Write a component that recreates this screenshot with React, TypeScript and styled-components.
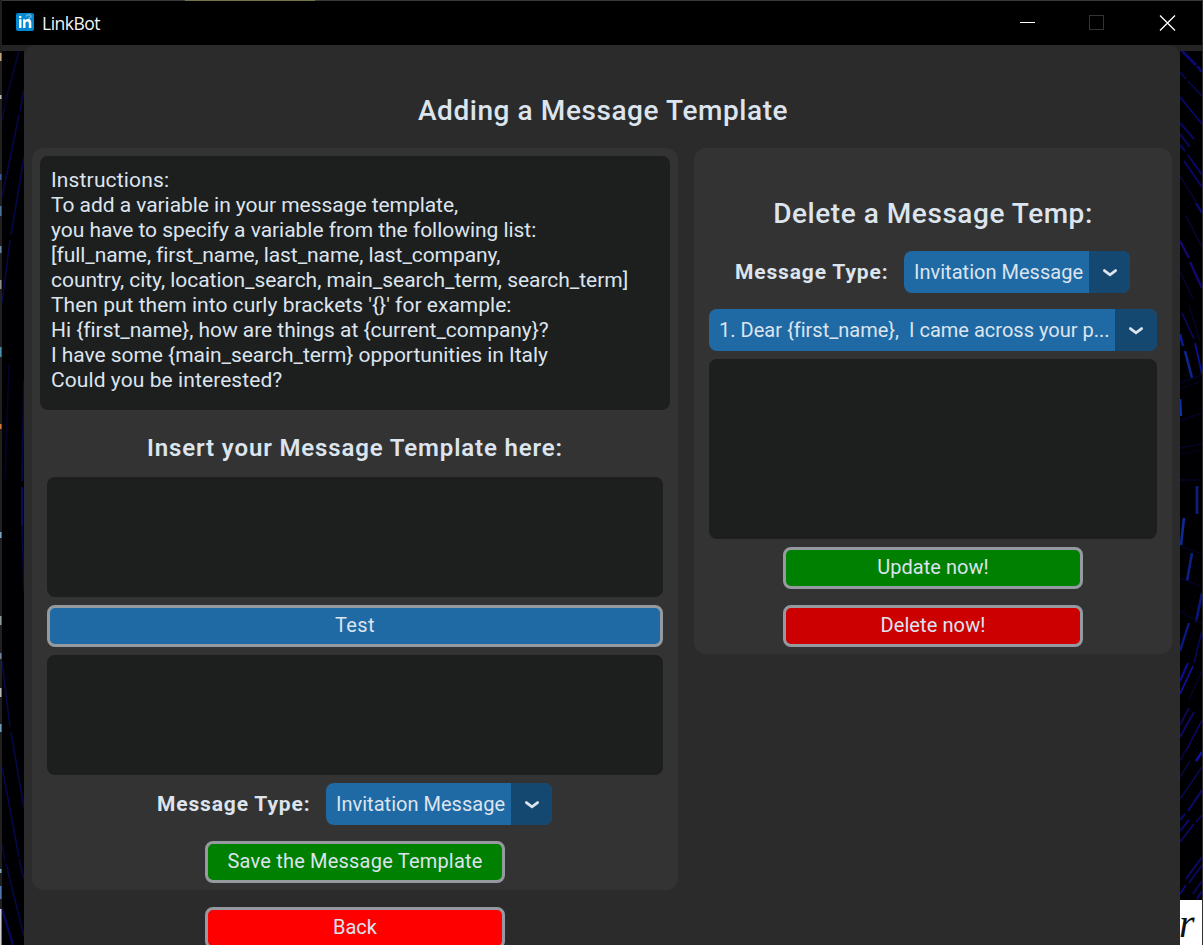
import React from "react";
import styled, { createGlobalStyle } from "styled-components";

const GlobalStyle = createGlobalStyle`
  *, *::before, *::after { box-sizing: border-box; }
  html, body { margin: 0; padding: 0; background: #000; overflow: hidden; }
  body { font-family: Roboto, "Liberation Sans", sans-serif; color: #dce4ee; }
`;

const Desktop = styled.div`
  width: 1203px;
  height: 945px;
  display: grid;
  grid-template-columns: 2px 1200px 1px;
  background: #2e2e2e;
  overflow: hidden;
`;

const Window = styled.div`
  display: flex;
  flex-direction: column;
  height: 945px;
  min-height: 0;
  overflow: hidden;
`;

const TopEdge = styled.div`
  height: 1px;
  flex: none;
  background: linear-gradient(to right, #3a3a3a 183px, #747446 183px, #747446 313px, #3a3a3a 313px);
`;

const TitleBar = styled.header`
  height: 44px;
  flex: none;
  display: flex;
  align-items: center;
  justify-content: space-between;
  background: #000;
  padding: 0 26px 0 14px;
`;

const AppName = styled.div`
  display: flex;
  align-items: center;
  gap: 8px;
  height: 44px;
  padding-bottom: 2px;
`;

const AppTitle = styled.span`
  font: 400 17.5px/22px "Open Sans", "Noto Sans", sans-serif;
  letter-spacing: -0.5px;
  color: #f4f4f4;
  padding-top: 2px;
`;

const WindowButtons = styled.div`
  display: flex;
  align-items: center;
  gap: 54px;
  padding-bottom: 1px;
`;

const Body = styled.div`
  flex: 1;
  min-height: 0;
  display: grid;
  grid-template-columns: 22px 1156px 22px;
  background: #242424;
`;

const ArtColumn = styled.aside`
  padding-top: 6px;
  min-height: 0;
  overflow: hidden;
  svg { display: block; background: #000003; }
`;

const Panel = styled.main`
  background: #2b2b2b;
  border-radius: 12px 12px 0 0;
  padding: 0 8px;
  min-height: 0;
  overflow: hidden;
`;

const Heading = styled.h1<{ $size: number; $height: number; $spacing?: number; $top?: number; $weight?: number }>`
  margin: 0;
  padding-top: ${(p) => p.$top ?? 0}px;
  font-weight: ${(p) => p.$weight ?? 500};
  font-size: ${(p) => p.$size}px;
  line-height: ${(p) => p.$height}px;
  letter-spacing: ${(p) => p.$spacing ?? 0}px;
  text-align: center;
  white-space: nowrap;
`;

const PageHead = styled.div`
  height: 103px;
  padding: 45px 0 0 2px;
`;

const Columns = styled.div`
  display: grid;
  grid-template-columns: 646px 478px;
  column-gap: 16px;
  align-items: start;
`;

const Column = styled.section`
  display: flex;
  flex-direction: column;
  align-items: center;
  gap: 17px;
`;

const Card = styled.div<{ $pad: string }>`
  width: 100%;
  display: flex;
  flex-direction: column;
  align-items: center;
  background: #333;
  border-radius: 12px;
  padding: ${(p) => p.$pad};
`;

const Instructions = styled.div`
  width: 630px;
  height: 254px;
  background: #1d1e1e;
  border-radius: 8px;
  padding: 12px 11px;
  font-size: 21px;
  line-height: 25px;
  white-space: pre;
`;

const Line = styled.div<{ $spacing: number }>`
  letter-spacing: ${(p) => p.$spacing}px;
`;

const TextBox = styled.div<{ $width: number; $height: number; $top?: number }>`
  width: ${(p) => p.$width}px;
  height: ${(p) => p.$height}px;
  margin-top: ${(p) => p.$top ?? 0}px;
  background: #1d1e1e;
  border-radius: 8px;
`;

const Button = styled.button<{ $color: string; $width?: number; $top?: number; $spacing?: number }>`
  width: ${(p) => p.$width ?? 300}px;
  height: 42px;
  flex: none;
  margin: ${(p) => p.$top ?? 8}px 0 0;
  padding: 0 0 2px;
  border: 3px solid #949a9f;
  border-radius: 8px;
  background: ${(p) => p.$color};
  color: #dce4ee;
  font: 20px/30px Roboto, sans-serif;
  letter-spacing: ${(p) => p.$spacing ?? 0.2}px;
`;

const TypeRow = styled.div<{ $top?: number }>`
  display: flex;
  align-items: center;
  justify-content: center;
  gap: 16px;
  margin: ${(p) => p.$top ?? 8}px 0 0;
  padding-right: 1px;
`;

const TypeLabel = styled.label`
  width: 153px;
  font-size: 21px;
  line-height: 40px;
  font-weight: 700;
  letter-spacing: 0.85px;
  white-space: nowrap;
`;

const SelectBox = styled.div<{ $width: number; $arrow: number; $top?: number }>`
  width: ${(p) => p.$width}px;
  height: 42px;
  margin-top: ${(p) => p.$top ?? 0}px;
  display: grid;
  grid-template-columns: minmax(0, 1fr) ${(p) => p.$arrow}px;
  border-radius: 8px;
  overflow: hidden;
  background: #1f6aa5;
`;

const SelectText = styled.span<{ $spacing: number }>`
  padding-left: 10px;
  font-size: 20px;
  line-height: 42px;
  letter-spacing: ${(p) => p.$spacing}px;
  white-space: pre;
`;

const SelectArrow = styled.span`
  display: flex;
  align-items: center;
  justify-content: center;
  padding-top: 1px;
  background: #144870;
`;

interface SelectProps {
  text: string;
  width: number;
  arrow: number;
  spacing: number;
  top?: number;
}

function Select({ text, width, arrow, spacing, top }: SelectProps) {
  return (
    <SelectBox $width={width} $arrow={arrow} $top={top}>
      <SelectText $spacing={spacing}>{text}</SelectText>
      <SelectArrow>
        <svg width="16" height="10" viewBox="0 0 16 10" fill="none" stroke="#dce4ee" strokeWidth="2.8" strokeLinecap="round" strokeLinejoin="miter">
          <path d="M2.400 2.600 L8 6.800 L13.600 2.600" />
        </svg>
      </SelectArrow>
    </SelectBox>
  );
}

function LinkedInMark() {
  return (
    <svg width="18" height="18" viewBox="0 0 18 18">
      <rect width="18" height="18" rx="2" fill="#0288d1" />
      <path d="M3 6.3h2.5V15H3zM7 6.3h2.4v1.2c.6-.9 1.500-1.400 2.700-1.400 2.200 0 3.200 1.400 3.200 3.700V15h-2.500v-4.600c0-1.300-.5-2-1.500-2-1.200 0-1.800.8-1.800 2.100V15H7z" fill="#fff" />
      <circle cx="4.200" cy="4" r="1.300" fill="#fff" />
      <path d="M10 3.500c.5-2 4.500-2.500 5-.3.200 1.300-1.800 1.500-2.500 2.700" stroke="#64b5e2" strokeWidth="1.500" fill="none" />
    </svg>
  );
}

type Stroke = [number, number, number, number, string, number];

const leftStrokes: Stroke[] = [
  [17, 0, 3, 52, "#060638", 1.6],
  [3, 54, 0, 70, "#060638", 1.6],
  [22, 39, 18, 60, "#070748", 1.6],
  [17, 64, 0, 146, "#070748", 1.6],
  [22, 106, 9, 184, "#070748", 1.6],
  [8, 189, 0, 252, "#070748", 1.6],
  [7, 313, 3, 428, "#04042b", 1.6],
  [22, 330, 20, 430, "#060640", 1.8],
  [20, 436, 20, 475, "#090960", 2],
  [20, 475, 22, 540, "#060640", 1.6],
  [0, 610, 8, 676, "#070748", 1.6],
  [9, 681, 22, 757, "#070748", 1.6],
  [0, 716, 17, 806, "#070748", 1.6],
  [17, 808, 22, 828, "#070748", 1.6],
  [0, 793, 3, 810, "#060638", 1.6],
  [4, 813, 22, 885, "#070748", 1.6],
  [0, 858, 11, 894, "#080858", 2.4],
];

const rightStrokes: Stroke[] = [
  [2, 0, 16, 14, "#0b0b78", 2.6],
  [17, 15, 22, 21, "#0b0b78", 2.6],
  [0, 21, 6, 28, "#08085c", 1.6],
  [8, 30, 22, 45, "#08085c", 1.4],
  [0, 46, 22, 73, "#090970", 1.5],
  [0, 72, 14, 88, "#080860", 2],
  [0, 83, 10, 96, "#080860", 2],
  [0, 94, 5, 100, "#080860", 2],
  [8, 104, 22, 124, "#08086a", 2],
  [4, 110, 22, 136, "#08086a", 2],
  [0, 125, 16, 151, "#0b063c", 1.4],
  [16, 152, 22, 162, "#0b0b78", 2.4],
  [6, 165, 22, 196, "#0b0638", 1.4],
  [0, 190, 9, 207, "#150775", 2.2],
  [10, 211, 22, 237, "#150775", 2.2],
  [0, 220, 13, 248, "#060630", 1.4],
  [9, 254, 20, 290, "#05052a", 1.4],
  [2, 262, 14, 288, "#090965", 1.6],
  [15, 292, 22, 323, "#08109a", 1.8],
  [0, 283, 3, 295, "#0a1a94", 2.6],
  [5, 300, 12, 327, "#0c248f", 2.6],
  [0, 348, 1, 365, "#1030a8", 2.4],
  [0, 332, 22, 324, "#040427", 1.5],
  [0, 338, 22, 330, "#040427", 1],
  [0, 370, 22, 362, "#040427", 1.5],
  [0, 397, 22, 393, "#040427", 1.5],
  [0, 403, 22, 399, "#040427", 1],
  [0, 429, 22, 429, "#040427", 1.5],
  [17, 435, 17, 463, "#0c1f80", 2.6],
  [4, 467, 1, 494, "#0c2c91", 2.6],
  [12, 502, 7, 530, "#0b1f85", 2.6],
  [22, 542, 16, 571, "#0a157c", 2.6],
  [9, 572, 0, 600, "#0b187c", 2.4],
  [0, 495, 22, 503, "#040427", 1.2],
  [0, 527, 22, 536, "#040427", 1.2],
  [0, 560, 22, 573, "#040427", 1.2],
  [22, 580, 14, 612, "#09095c", 1.6],
  [8, 612, 0, 630, "#0c0c8d", 2.2],
  [13, 615, 0, 643, "#1111a4", 1.6],
  [22, 620, 9, 649, "#060628", 1.4],
  [9, 657, 0, 674, "#0d0750", 2],
  [14, 661, 0, 686, "#0d0765", 2],
  [22, 669, 6, 700, "#100770", 1.4],
  [22, 701, 16, 710, "#1111a0", 2.6],
  [10, 710, 0, 726, "#08083d", 1.6],
  [5, 700, 0, 710, "#08083d", 1.6],
  [22, 716, 0, 748, "#090955", 1.4],
  [22, 739, 8, 760, "#0a0a68", 2.2],
  [5, 763, 0, 769, "#0a0a68", 2],
  [9, 769, 0, 780, "#0a0a68", 2],
  [22, 764, 16, 771, "#080860", 1.6],
  [14, 773, 0, 791, "#0a0a68", 1.6],
  [22, 806, 6, 828, "#0a0a68", 2],
  [22, 814, 9, 832, "#0a0a68", 1.6],
  [6, 834, 0, 843, "#0b0b80", 1.6],
  [22, 830, 13, 843, "#080860", 1.8],
  [22, 840, 17, 848, "#0a0a68", 2],
];

function Wallpaper({ strokes, signature }: { strokes: Stroke[]; signature?: boolean }) {
  return (
    <ArtColumn>
      <svg width="22" height="894" viewBox="0 0 22 894">
        {strokes.map(([x1, y1, x2, y2, color, width], i) => (
          <line key={i} x1={x1} y1={y1} x2={x2} y2={y2} stroke={color} strokeWidth={width} />
        ))}
        {signature && (
          <>
            <rect y="849" width="22" height="45" fill="#fff" />
            <text x="-1" y="886" fontFamily="Liberation Serif, serif" fontStyle="italic" fontSize="40" fill="#111">r</text>
          </>
        )}
      </svg>
    </ArtColumn>
  );
}

const edgeMarks: [number, number, string][] = [
  [53, 8, "#c3a477"], [95, 4, "#b8b8b8"], [174, 6, "#315d91"], [206, 10, "#4c7297"],
  [246, 7, "#66869e"], [280, 9, "#8b8b8b"], [347, 10, "#4b91ae"], [424, 5, "#d37835"],
  [532, 6, "#77a5c4"], [616, 9, "#8f9a9e"], [653, 6, "#70859d"], [688, 9, "#b5b5b5"],
  [724, 8, "#6ba0bd"], [869, 4, "#76a9b2"], [886, 13, "#4d79ad"], [909, 36, "#cfcfcf"],
];

export default function App() {
  return (
    <>
      <GlobalStyle />
      <Desktop>
        <svg width="2" height="945" viewBox="0 0 2 945">
          <rect width="2" height="945" fill="#202020" />
          {edgeMarks.map(([y, height, color]) => (
            <rect key={y} y={y} width="1.500" height={height} fill={color} />
          ))}
        </svg>
        <Window>
          <TopEdge />
          <TitleBar>
            <AppName>
              <LinkedInMark />
              <AppTitle>LinkBot</AppTitle>
            </AppName>
            <WindowButtons>
              <svg width="15" height="15" viewBox="0 0 15 15" shapeRendering="crispEdges"><path d="M0 7.500H15" stroke="#fff" /></svg>
              <svg width="15" height="15" viewBox="0 0 15 15" shapeRendering="crispEdges"><rect x=".5" y=".5" width="14" height="14" fill="none" stroke="#333" /></svg>
              <svg width="18" height="16" viewBox="0 0 18 16"><path d="M2 .5L17 15.500M17 .5L2 15.500" stroke="#fff" strokeWidth="1.300" /></svg>
            </WindowButtons>
          </TitleBar>
          <Body>
            <Wallpaper strokes={leftStrokes} />
            <Panel>
              <PageHead>
                <Heading $size={28} $height={42} $spacing={0.58}>Adding a Message Template</Heading>
              </PageHead>
              <Columns>
                <Column>
                  <Card $pad="8px 8px 7px">
                    <Instructions>
                      <Line $spacing={0.15}>Instructions:</Line>
                      <Line $spacing={-0.05}>To add a variable in your message template,</Line>
                      <Line $spacing={-0.04}>you have to specify a variable from the following list:</Line>
                      <Line $spacing={-0.08}>[full_name, first_name, last_name, last_company,</Line>
                      <Line $spacing={-0.03}>country, city, location_search, main_search_term, search_term]</Line>
                      <Line $spacing={0.02}>{"Then put them into curly brackets '{}' for example:"}</Line>
                      <Line $spacing={-0.04}>{"Hi {first_name}, how are things at {current_company}?"}</Line>
                      <Line $spacing={-0.05}>{"I have some {main_search_term} opportunities in Italy"}</Line>
                      <Line $spacing={0.08}>Could you be interested?</Line>
                    </Instructions>
                    <Heading as="h2" $size={24} $height={57} $top={10} $weight={600} $spacing={0.86}>Insert your Message Template here:</Heading>
                    <TextBox $width={616} $height={120} />
                    <Button $color="#1f6aa5" $width={616} $spacing={0.4}>Test</Button>
                    <TextBox $width={616} $height={120} $top={8} />
                    <TypeRow>
                      <TypeLabel>Message Type:</TypeLabel>
                      <Select text="Invitation Message" width={226} arrow={41} spacing={0.02} />
                    </TypeRow>
                    <Button $color="#008000" $top={16}>Save the Message Template</Button>
                  </Card>
                  <Button $color="#ff0000" $top={0} $spacing={0}>Back</Button>
                </Column>
                <Card $pad="45px 15px 7px">
                  <Heading as="h2" $size={28} $height={42} $spacing={0.55}>Delete a Message Temp:</Heading>
                  <TypeRow $top={16}>
                    <TypeLabel>Message Type:</TypeLabel>
                    <Select text="Invitation Message" width={226} arrow={41} spacing={0.02} />
                  </TypeRow>
                  <Select text="1. Dear {first_name},  I came across your p..." width={448} arrow={42} spacing={0.01} top={16} />
                  <TextBox $width={448} $height={180} $top={8} />
                  <Button $color="#008000" $spacing={0.05}>Update now!</Button>
                  <Button $color="#cc0000" $top={16} $spacing={0.1}>Delete now!</Button>
                </Card>
              </Columns>
            </Panel>
            <Wallpaper strokes={rightStrokes} signature />
          </Body>
        </Window>
      </Desktop>
    </>
  );
}
